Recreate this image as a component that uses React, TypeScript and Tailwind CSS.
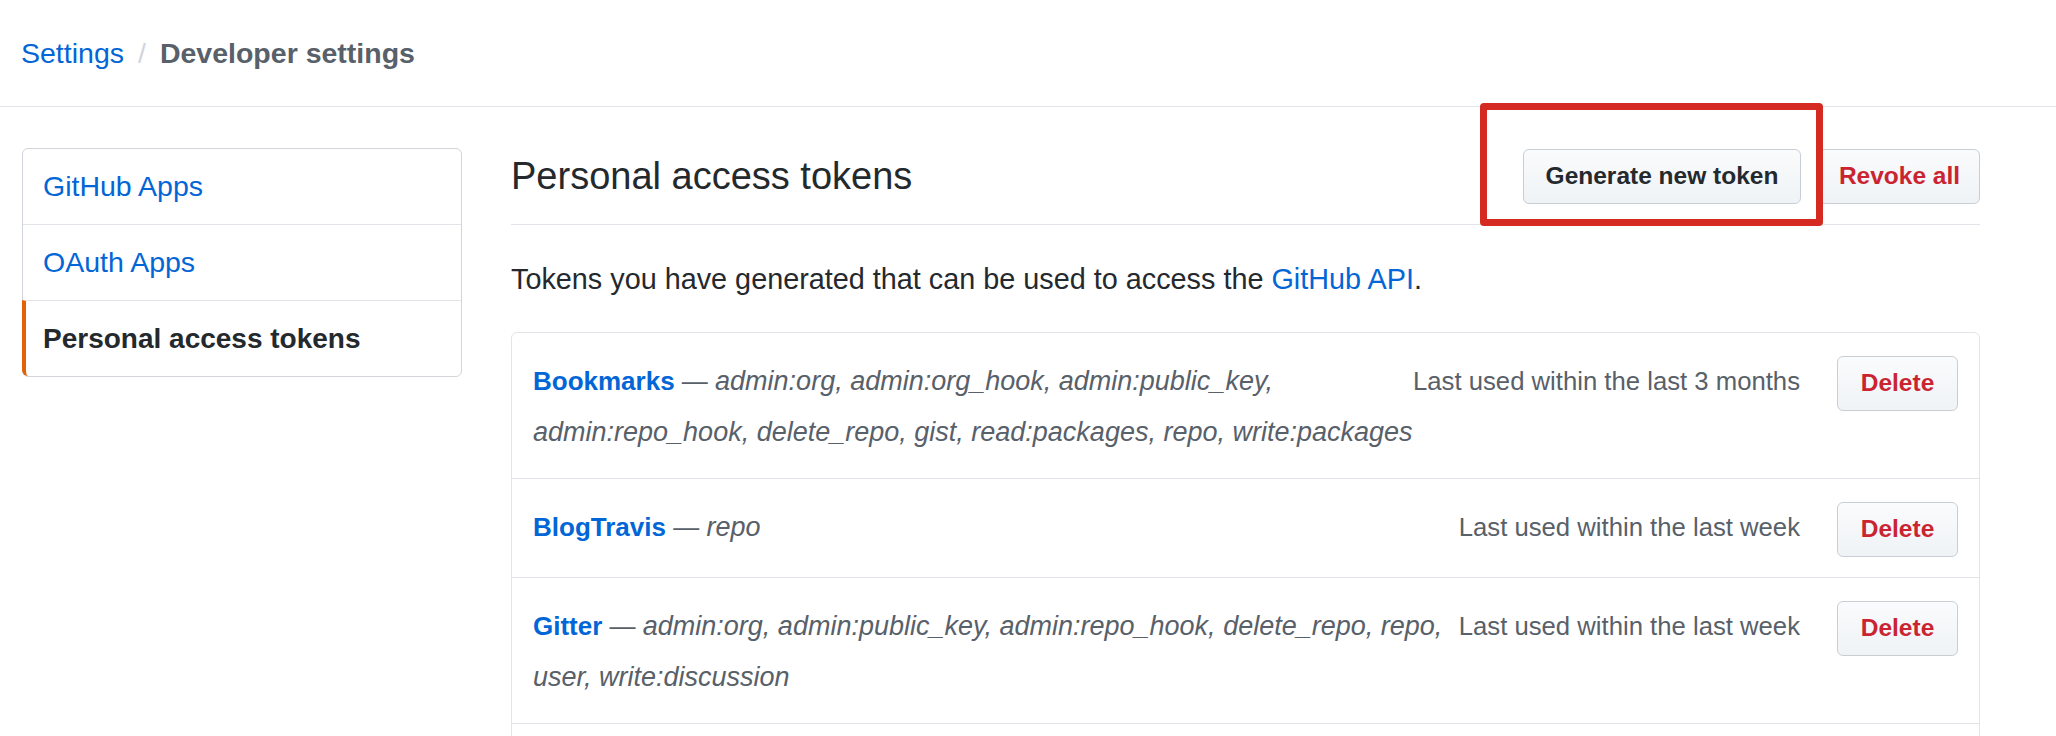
import React from "react";

type Token = {
    name: string;
    scopes: string[];
    used: string;
};

const tokens: Token[] = [
    {
        name: "Bookmarks",
        scopes: [
            "admin:org, admin:org_hook, admin:public_key,",
            "admin:repo_hook, delete_repo, gist, read:packages, repo, write:packages",
        ],
        used: "Last used within the last 3 months",
    },
    {
        name: "BlogTravis",
        scopes: ["repo"],
        used: "Last used within the last week",
    },
    {
        name: "Gitter",
        scopes: [
            "admin:org, admin:public_key, admin:repo_hook, delete_repo, repo,",
            "user, write:discussion",
        ],
        used: "Last used within the last week",
    },
];

const btn =
    "flex h-[55px] items-center justify-center rounded-[6px] border border-[#c9ced4] bg-gradient-to-b from-[#fafbfc] to-[#eff3f6] text-[24.5px] font-bold";

function TokenRow({ token }: { token: Token }) {
    return (
        <div className="flex items-start border-t border-[#e1e4e8] px-[21px] pt-[23px] pb-[20px] first:border-t-0">
            <div className="text-[26px] leading-[51px] text-[#586069]">
                {token.scopes.map((line, i) => (
                    <div key={i} className="whitespace-nowrap">
                        {i === 0 && (
                            <>
                                <strong className="font-bold text-[#0366d6]">{token.name}</strong>
                                <span> — </span>
                            </>
                        )}
                        <em className="text-[27px] italic">{line}</em>
                    </div>
                ))}
            </div>
            <span className="ml-auto whitespace-nowrap text-[25.7px] leading-[51px] text-[#586069]">
                {token.used}
            </span>
            <button className={`${btn} ml-[37px] w-[121px] shrink-0 text-[#cb2431]`}>Delete</button>
        </div>
    );
}

export default function App() {
    return (
        <div className="min-h-screen bg-white font-['Liberation_Sans',Arial,sans-serif] text-[#24292e]">
            {/* breadcrumb */}
            <div className="flex h-[107px] items-center border-b border-[#e1e4e8] pl-[21px] text-[28.5px]">
                <a className="text-[#0366d6]">Settings</a>
                <span className="mx-[14px] text-[#d1d5da]">/</span>
                <span className="font-bold text-[#586069]">Developer settings</span>
            </div>

            <div className="flex pt-[41px] pr-[76px] pl-[22px]">
                {/* sidebar */}
                <nav className="w-[440px] shrink-0 self-start rounded-[6px] border border-[#d1d5da] text-[28.5px]">
                    <div className="flex h-[75px] items-center pl-[20px] text-[#0366d6]">GitHub Apps</div>
                    <div className="flex h-[76px] items-center border-t border-[#e1e4e8] pl-[20px] text-[#0366d6]">
                        OAuth Apps
                    </div>
                    <div className="-ml-px flex h-[76px] items-center rounded-bl-[6px] border-t border-l-4 border-t-[#e1e4e8] border-l-[#e36209] pl-[17px] text-[28px] font-bold text-[#24292e]">
                        Personal access tokens
                    </div>
                </nav>

                {/* main */}
                <main className="ml-[49px] flex-1">
                    <div className="flex items-center border-b border-[#e1e4e8] pt-px pb-[20px]">
                        <h2 className="text-[38px] leading-[55px] font-normal">Personal access tokens</h2>
                        <div className="relative ml-auto flex gap-[18px]">
                            <button className={`${btn} w-[278px] text-[#24292e]`}>Generate new token</button>
                            <button className={`${btn} w-[161px] text-[#cb2431]`}>Revoke all</button>
                            <div className="pointer-events-none absolute -top-[46px] -left-[43px] h-[123px] w-[343px] rounded-[4px] border-[7px] border-[#d42a21]" />
                        </div>
                    </div>

                    <p className="mt-[33px] mb-[31px] text-[28.8px] leading-[43px]">
                        Tokens you have generated that can be used to access the{" "}
                        <a className="text-[#0366d6]">GitHub API</a>.
                    </p>

                    <div className="rounded-[6px] border border-[#e1e4e8]">
                        {tokens.map((t) => (
                            <TokenRow key={t.name} token={t} />
                        ))}
                        <div className="h-[60px] border-t border-[#e1e4e8]" />
                    </div>
                </main>
            </div>
        </div>
    );
}
